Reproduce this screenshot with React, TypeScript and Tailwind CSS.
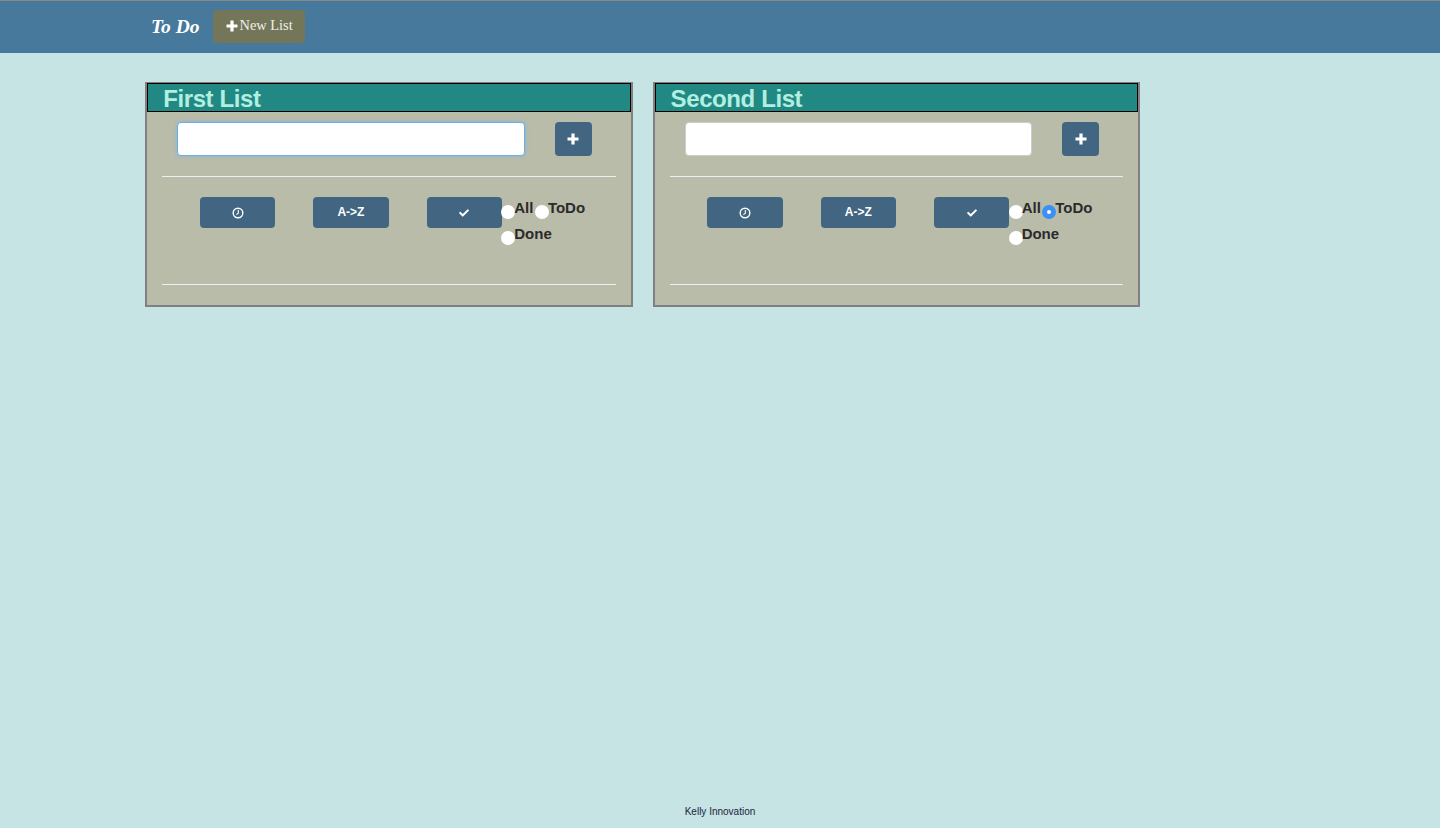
import { FaCheck } from 'react-icons/fa';

const SANS = "font-['Liberation_Sans',Arial,sans-serif]";

const LISTS = [
  { id: 'first', title: 'First List', filter: '', focused: true },
  { id: 'second', title: 'Second List', filter: 'todo', focused: false },
];

function PlusIcon({ className }: { className?: string }) {
  return (
    <svg viewBox="0 0 12 12" className={className} fill="currentColor">
      <path d="M4.4 0.5h3.2v3.9h3.9v3.2H7.6v3.9H4.4V7.6H0.5V4.4h3.9z" />
    </svg>
  );
}

function ClockIcon() {
  return (
    <svg viewBox="0 0 11 11" className="mt-[2px] h-[12px] w-[12px]" fill="none" stroke="currentColor">
      <circle cx="5.5" cy="5.5" r="4.4" strokeWidth="1.3" />
      <path d="M5.8 2.8v2.9L4 7" strokeWidth="1" />
    </svg>
  );
}

function SortButton({ children }: { children: React.ReactNode }) {
  return (
    <button className="flex h-[31px] w-[75.25px] shrink-0 items-center justify-center rounded-[4px] bg-[#426682] pb-[2px] text-[12px] font-bold text-white">
      {children}
    </button>
  );
}

function Radio({ name, label, checked }: { name: string; label: string; checked?: boolean }) {
  return (
    <label className="flex h-[26px] items-start">
      <input
        type="radio"
        name={name}
        defaultChecked={checked}
        className="mt-[10px] -mr-[1px] h-[14px] w-[14px] appearance-none rounded-full bg-white checked:border-[5.5px] checked:border-[#3b90f5]"
      />
      <span className="text-[15px] leading-[26px] font-bold text-[#2b2b2b]">{label}</span>
    </label>
  );
}

function ListCard({ id, title, filter, focused }: { id: string; title: string; filter: string; focused: boolean }) {
  return (
    <section className="h-[225px] w-[487.4px] border-2 border-[#808080] bg-[#babcaa]">
      <h2 className="-mt-px h-[29px] border border-black bg-[#218884] pl-[15px] text-[24px] leading-[29px] font-bold tracking-[-0.4px] text-[#b3efe0]">
        {title}
      </h2>
      <div className="px-[15px]">
        <div className="flex gap-[30px] pt-[10px] pl-[15px]">
          <input
            type="text"
            className={`h-[34px] w-[347.5px] rounded-[4px] border bg-white ${focused ? 'border-[#66afe9] shadow-[0_0_4px_rgba(102,175,233,0.6)]' : 'border-[#ccc]'}`}
          />
          <button className="flex h-[34px] w-[37px] items-center justify-center rounded-[4px] bg-[#426682] text-white">
            <PlusIcon className="h-[12px] w-[12px]" />
          </button>
        </div>
        <hr className="mt-5 border-t border-[#eee]" />
        <div className="flex h-[107px] pt-5 pl-[37.9px]">
          <div className="flex gap-[38px]">
            <SortButton><ClockIcon /></SortButton>
            <SortButton>A-&gt;Z</SortButton>
            <SortButton><FaCheck className="mt-[2px] text-[10px]" /></SortButton>
          </div>
          <div className="-mt-[2px] -ml-[0.6px] flex h-[52px] w-[100px] flex-wrap content-start gap-x-[1.5px]">
            <Radio name={id} label="All" checked={filter === 'all'} />
            <Radio name={id} label="ToDo" checked={filter === 'todo'} />
            <div className="w-full">
              <Radio name={id} label="Done" checked={filter === 'done'} />
            </div>
          </div>
        </div>
        <hr className="border-t border-[#eee]" />
      </div>
    </section>
  );
}

export default function App() {
  return (
    <div className={`flex h-[828px] flex-col overflow-hidden bg-[#c5e4e3] ${SANS}`}>
      <header className="flex h-[53px] items-center border-t border-[#8a8a8a] bg-[#46799b] pl-[151px] font-['Liberation_Serif',serif]">
        <span className="text-[19.5px] font-bold text-white italic">To Do</span>
        <button className="-mt-[1px] ml-[13px] flex h-[33px] w-[92px] items-center justify-center gap-[2px] rounded-[4px] bg-[#737658] pb-[2px] pl-[1px] text-[14.4px] text-[#f0f0ea]">
          <PlusIcon className="h-[12px] w-[12px] text-white" />
          New List
        </button>
      </header>
      <main className="flex flex-1 items-start gap-5 pt-[29px] pl-[145.2px]">
        {LISTS.map(list => (
          <ListCard key={list.id} {...list} />
        ))}
      </main>
      <footer className="pb-[10px] text-center text-[10px] leading-[12px] text-[#1c2340]">Kelly Innovation</footer>
    </div>
  );
}
